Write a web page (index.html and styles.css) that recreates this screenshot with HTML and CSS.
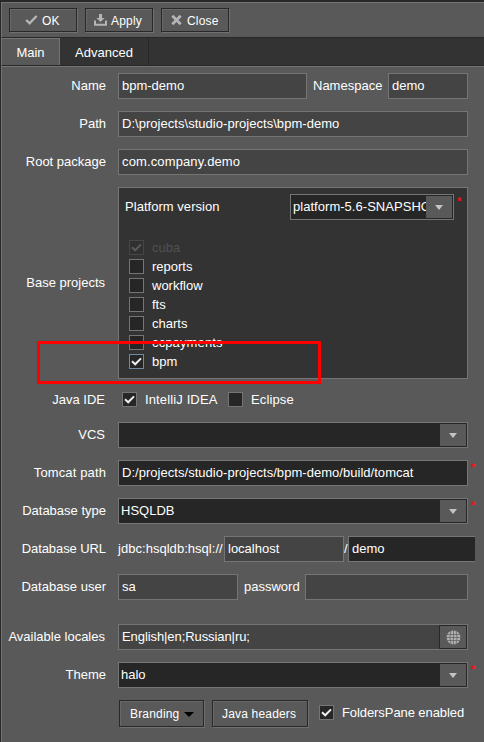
FILE: index.html
```html
<!DOCTYPE html>
<html lang="en">
<head>
<meta charset="utf-8">
<title>Project properties</title>
<link rel="stylesheet" href="styles.css">
</head>
<body>
<svg width="0" height="0" class="defs">
  <symbol id="check" viewBox="0 0 11 9"><path d="M1 4.3 L4.2 7.3 L10 1.4" fill="none" stroke="currentColor" stroke-width="2"/></symbol>
</svg>
<div class="window">
  <div class="toolbar">
    <div class="button tool"><svg class="icon" viewBox="0 0 13 12"><path d="M1.2 6 L4.6 9.3 L11.6 2" fill="none" stroke="#b5b5b5" stroke-width="2.4"/></svg><span>OK</span></div>
    <div class="button tool"><svg class="icon" viewBox="0 0 13 12"><path d="M5 0h3v4h2.6L6.5 8 2.4 4H5z" fill="#b5b5b5"/><path d="M1 6.5V10.8H12V6.5" fill="none" stroke="#b5b5b5" stroke-width="2"/></svg><span>Apply</span></div>
    <div class="button tool"><svg class="icon" viewBox="0 0 13 12"><path d="M2.3 1.7 L10.7 10.3 M10.7 1.7 L2.3 10.3" fill="none" stroke="#b5b5b5" stroke-width="2.7"/></svg><span>Close</span></div>
  </div>
  <div class="tabs">
    <div class="tab active"><span>Main</span></div>
    <div class="tab"><span>Advanced</span></div>
  </div>
  <div class="form">
    <div class="row"><div class="label"><span>Name</span></div><div class="field name"><span>bpm-demo</span></div><div class="inline-label"><span>Namespace</span></div><div class="field namespace"><span>demo</span></div></div>
    <div class="row"><div class="label"><span>Path</span></div><div class="field wide"><span class="loose">D:\projects\studio-projects\bpm-demo</span></div></div>
    <div class="row"><div class="label"><span>Root package</span></div><div class="field wide"><span class="looser">com.company.demo</span></div></div>
    <div class="row base"><div class="label nudged"><span>Base projects</span></div>
      <div class="panel">
        <div class="platform"><span class="loose">Platform version</span><div class="field combo version"><span class="loose">platform-5.6-SNAPSHOT</span><i class="drop"></i></div><b class="star">*</b></div>
        <div class="checks">
          <div class="option disabled"><i class="box"><svg><use href="#check"/></svg></i><span>cuba</span></div>
          <div class="option"><i class="box"></i><span>reports</span></div>
          <div class="option"><i class="box"></i><span>workflow</span></div>
          <div class="option"><i class="box"></i><span>fts</span></div>
          <div class="option"><i class="box"></i><span>charts</span></div>
          <div class="option"><i class="box"></i><span class="looser">ccpayments</span></div>
          <div class="option focused"><i class="box"><svg><use href="#check"/></svg></i><span>bpm</span></div>
        </div>
      </div>
    </div>
    <div class="row ide"><div class="label nudged"><span>Java IDE</span></div>
      <div class="option idea"><i class="box"><svg><use href="#check"/></svg></i><span class="looser">IntelliJ IDEA</span></div>
      <div class="option"><i class="box"></i><span class="looser">Eclipse</span></div>
    </div>
    <div class="row"><div class="label nudged"><span>VCS</span></div><div class="field wide combo"><i class="drop"></i></div></div>
    <div class="row"><div class="label"><span class="looser">Tomcat path</span></div><div class="field wide dark"><span class="loose">D:/projects/studio-projects/bpm-demo/build/tomcat</span></div><b class="star">*</b></div>
    <div class="row"><div class="label"><span>Database type</span></div><div class="field wide combo"><span>HSQLDB</span><i class="drop"></i></div><b class="star">*</b></div>
    <div class="row"><div class="label"><span class="tight">Database URL</span></div><div class="prefix"><span class="loose">jdbc:hsqldb:hsql://</span></div><div class="field short"><span>localhost</span></div><div class="slash">/</div><div class="field dark dbname"><span>demo</span></div></div>
    <div class="row credentials"><div class="label"><span>Database user</span></div><div class="field short"><span>sa</span></div><div class="inline-label"><span>password</span></div><div class="field password"></div></div>
    <div class="row"><div class="label nudged"><span>Available locales</span></div><div class="field wide locales"><span class="tight">English|en;Russian|ru;</span><i class="globe"><svg viewBox="0 0 15 15"><circle cx="7.5" cy="7.5" r="6.9" fill="#b0b0b0"/><path d="M0 4.5H15M0 7.5H15M0 10.5H15M7.5 0V15M5 .5Q2.8 7.5 5 14.5M10 .5Q12.2 7.5 10 14.5" fill="none" stroke="#646464" stroke-width=".8"/></svg></i></div></div>
    <div class="row"><div class="label"><span>Theme</span></div><div class="field wide combo"><span>halo</span><i class="drop"></i></div><b class="star">*</b></div>
    <div class="row actions">
      <div class="button branding"><span>Branding</span><i class="caret"></i></div>
      <div class="button headers"><span>Java headers</span></div>
      <div class="option"><i class="box"><svg><use href="#check"/></svg></i><span class="tight">FoldersPane enabled</span></div>
    </div>
  </div>
  <div class="highlight"></div>
</div>
</body>
</html>
```
FILE: styles.css
```css
* { box-sizing: border-box; }
body { margin: 0; background: #282828; color: #fff; font: 13px/16px "Liberation Sans", Arial, sans-serif; }
span { white-space: nowrap; }
.loose { letter-spacing: 0.035px; }
.looser { letter-spacing: 0.13px; }
.tight { letter-spacing: -0.08px; }
.defs { display: block; }
.window { position: relative; width: 484px; height: 742px; overflow: hidden; padding: 2px 0 0 1px; }
.toolbar { display: flex; gap: 8px; height: 35px; padding: 5px 0 0 7px; background: #595959; border-top: 1px solid #757575; border-left: 1px solid #757575; }
.button { display: flex; align-items: center; background: #595959; border: 1px solid #282828; box-shadow: 1px 1px 0 #707070, inset 1px 1px 0 #686868; font-size: 12px; letter-spacing: 0.18px; }
.tool { width: 68px; height: 24px; padding: 2px 0 0 15px; gap: 4px; }
.icon { width: 13px; height: 12px; flex: none; margin-top: -2px; }
.tool:nth-child(2), .tool:nth-child(3) { padding-left: 8px; }
.tabs { display: flex; height: 29px; background: #333; border-top: 1px solid #282828; border-bottom: 1px solid #282828; border-left: 1px solid #757575; }
.tab { display: flex; align-items: center; justify-content: center; width: 89px; border-right: 1px solid #282828; padding-top: 3px; }
.tab.active { width: 58px; background: #595959; border-right-color: #757575; border-top: 1px solid #757575; padding-top: 2px; }
.form { height: 676px; padding-top: 6px; background: #595959; border-left: 1px solid #757575; border-top: 1px solid #757575; }
.row { display: flex; align-items: center; height: 26px; margin-bottom: 12px; }
.label { width: 104px; margin-right: 12px; text-align: right; flex: none; }
.label.nudged { padding-right: 1px; }
.label span, .inline-label span, .prefix span { display: inline-block; text-align: left; }
.field { display: flex; align-items: center; height: 26px; padding-left: 3px; background: #444; border: 1px solid #757575; overflow: hidden; flex: none; }
.wide { width: 350px; }
.name { width: 189px; }
.namespace { width: 80px; }
.short { width: 120px; }
.password { width: 163px; }
.dark, .combo { background: #262626; }
.combo { padding: 0 1px 0 2px; }
.inline-label { padding: 0 6px; }
.name + .inline-label { width: 81px; }
.short + .inline-label { width: 67px; }
.drop { display: flex; align-items: center; justify-content: center; width: 26px; height: 22px; margin-left: auto; background: #595959; flex: none; }
.drop::after { content: ""; border: 4px solid transparent; border-top: 5px solid #c4c4c4; border-bottom: 0; }
.star { align-self: flex-start; margin: 1px 0 0 3px; color: #ff1010; font-weight: bold; font-size: 11px; line-height: 12px; }
.base { height: 192px; }
.panel { width: 350px; height: 192px; padding: 6px 0 0 6px; background: #333; border: 1px solid #757575; }
.platform { display: flex; align-items: center; height: 26px; margin-bottom: 18px; }
.version { width: 164px; margin-left: auto; }
.version span { overflow: hidden; width: 133px; flex: none; }
.platform .star { width: 10px; margin-right: 0; }
.checks { padding-left: 4px; }
.option { display: flex; align-items: center; height: 19px; gap: 8px; }
.box { display: flex; align-items: center; justify-content: center; width: 15px; height: 15px; background: #262626; border: 1px solid #757575; flex: none; }
.box svg { width: 11px; height: 9px; color: #eee; }
.disabled { color: #515151; }
.disabled .box { background: #303030; border-color: #464646; }
.disabled svg { color: #5a5a5a; }
.focused .box { border-color: #7189a5; }
.ide { height: 19px; }
.ide .option { padding-bottom: 2px; }
.ide .label { padding-bottom: 2px; }
.idea { width: 106px; margin-left: 4px; }
.prefix { width: 106px; }
.slash { width: 4px; }
.dbname { width: 127px; border-right: 0; }
.credentials { margin-bottom: 24px; }
.locales { padding-right: 0; }
.globe { display: flex; align-items: center; justify-content: center; width: 28px; height: 24px; margin-left: auto; background: #595959; border: 1px solid #282828; flex: none; }
.globe svg { width: 15px; height: 15px; }
.actions { height: 27px; padding-left: 117px; }
.branding { width: 85px; height: 27px; padding-left: 10px; margin-right: 8px; gap: 5px; }
.caret { border: 5px solid transparent; border-top-color: #000; border-bottom: 0; margin-top: 2px; }
.headers { width: 96px; height: 27px; padding-left: 9px; margin-right: 11px; }
.actions .option { padding-bottom: 2px; }
.highlight { position: absolute; left: 37px; top: 341px; width: 284px; height: 43px; border: 3px solid #f00; }
```
